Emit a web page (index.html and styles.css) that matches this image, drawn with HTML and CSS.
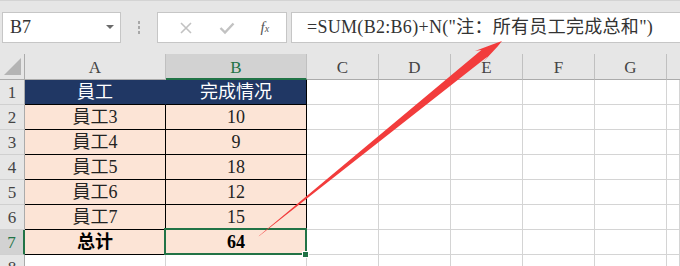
FILE: index.html
```html
<html lang="zh">
<head>
    <meta charset="UTF-8">
    <title>Sheet</title>
    <link rel="stylesheet" href="styles.css">
</head>
<body>
    <div class="app">
        <div class="toolbar">
            <div class="namebox">
                <span>B7</span>
                <svg class="caret" width="8" height="5" viewBox="0 0 8 5"><path d="M0 0H8L4 4Z" fill="#6a6a6a"/></svg>
            </div>
            <div class="dots"><i></i><i></i><i></i></div>
            <div class="fxbox">
                <svg width="14" height="14" viewBox="0 0 14 14"><path d="M2 2L12 12M12 2L2 12" stroke="#c2c2c2" stroke-width="1.6"/></svg>
                <svg width="16" height="14" viewBox="0 0 16 14"><path d="M1.5 7L6 11.5L14.5 2.5" stroke="#c2c2c2" stroke-width="2.4" fill="none"/></svg>
                <span class="fx">f<sub>x</sub></span>
            </div>
            <div class="formula">=SUM(B2:B6)+N("注：所有员工完成总和")</div>
        </div>

        <div class="sheet">
            <div class="corner"><span></span></div>
            <div class="colhead">A</div>
            <div class="colhead sel">B</div>
            <div class="colhead">C</div>
            <div class="colhead">D</div>
            <div class="colhead">E</div>
            <div class="colhead">F</div>
            <div class="colhead">G</div>
            <div class="colhead last"></div>

            <div class="rowhead">1</div>
            <div class="cell title">員工</div>
            <div class="cell title">完成情况</div>
            <div class="cell"></div><div class="cell"></div><div class="cell"></div><div class="cell"></div><div class="cell"></div><div class="cell"></div>

            <div class="rowhead">2</div>
            <div class="cell data">員工3</div>
            <div class="cell data">10</div>
            <div class="cell"></div><div class="cell"></div><div class="cell"></div><div class="cell"></div><div class="cell"></div><div class="cell"></div>

            <div class="rowhead">3</div>
            <div class="cell data">員工4</div>
            <div class="cell data">9</div>
            <div class="cell"></div><div class="cell"></div><div class="cell"></div><div class="cell"></div><div class="cell"></div><div class="cell"></div>

            <div class="rowhead">4</div>
            <div class="cell data">員工5</div>
            <div class="cell data">18</div>
            <div class="cell"></div><div class="cell"></div><div class="cell"></div><div class="cell"></div><div class="cell"></div><div class="cell"></div>

            <div class="rowhead">5</div>
            <div class="cell data">員工6</div>
            <div class="cell data">12</div>
            <div class="cell"></div><div class="cell"></div><div class="cell"></div><div class="cell"></div><div class="cell"></div><div class="cell"></div>

            <div class="rowhead">6</div>
            <div class="cell data">員工7</div>
            <div class="cell data">15</div>
            <div class="cell"></div><div class="cell"></div><div class="cell"></div><div class="cell"></div><div class="cell"></div><div class="cell"></div>

            <div class="rowhead sel">7</div>
            <div class="cell data total">总计</div>
            <div class="cell data total active">64</div>
            <div class="cell"></div><div class="cell"></div><div class="cell"></div><div class="cell"></div><div class="cell"></div><div class="cell"></div>

            <div class="rowhead">8</div>
            <div class="cell"></div><div class="cell"></div><div class="cell"></div><div class="cell"></div><div class="cell"></div><div class="cell"></div><div class="cell"></div><div class="cell"></div>
        </div>

        <!-- annotation arrow drawn over the sheet -->
        <svg class="arrow" width="680" height="266" viewBox="0 0 680 266">
            <path d="M258.6 236.6 L487.6 56.4 L483.4 61.8 L497.6 46.6 L502 41 L493 44.2 L475 51 L481.4 50 L259.4 235.4 Z" fill="#f23c3c"/>
        </svg>
    </div>
</body>
</html>
```

FILE: styles.css
```css
body {
    margin: 0;
    padding: 0;
    background: #fff;
}

.app {
    position: relative;
    width: 680px;
    height: 266px;
    overflow: hidden;
    font-family: "Liberation Serif", "Noto Sans CJK SC", serif;
}

.toolbar {
    height: 54px;
    box-sizing: border-box;
    background: #e6e6e6;
    border-top: 1px solid #d4d4d4;
    padding-top: 11px;
    display: flex;
    align-items: flex-start;
}

.namebox {
    margin-left: 2px;
    width: 119px;
    height: 31px;
    box-sizing: border-box;
    background: #fff;
    border: 1px solid #c6c6c6;
    display: flex;
    align-items: center;
    justify-content: space-between;
    padding: 0 6px 0 7px;
    font-size: 18px;
    color: #333;
}

.dots {
    width: 36px;
    height: 31px;
    display: flex;
    flex-direction: column;
    align-items: center;
    justify-content: center;
    gap: 2px;
}
.dots i {
    width: 2px;
    height: 3px;
    background: #a8a8a8;
}

.fxbox {
    width: 130px;
    height: 31px;
    box-sizing: border-box;
    background: #fff;
    border: 1px solid #c6c6c6;
    display: flex;
    align-items: center;
    justify-content: space-around;
    padding: 0 4px 0 8px;
}
.fx {
    font-style: italic;
    font-size: 15px;
    color: #555;
}
.fx sub {
    font-size: 10px;
    vertical-align: 0;
}

.formula {
    margin-left: 4px;
    flex: 1;
    height: 31px;
    box-sizing: border-box;
    background: #fff;
    border: 1px solid #c6c6c6;
    border-right: none;
    padding-left: 15px;
    line-height: 29px;
    font-size: 18px;
    letter-spacing: 0.3px;
    color: #333;
    white-space: nowrap;
}

.sheet {
    display: grid;
    grid-template-columns: 25px 141px 141px 72px 72px 72px 72px 72px 1fr;
    grid-template-rows: 26px repeat(8, 25px);
    font-size: 18px;
}

.sheet > div {
    box-sizing: border-box;
    border-right: 1px solid #d4d4d4;
    border-bottom: 1px solid #d4d4d4;
    display: flex;
    align-items: center;
    justify-content: center;
    line-height: 1;
}

.sheet > .colhead {
    background: #e6e6e6;
    border-right-color: #c0c0c0;
    border-bottom-color: #ababab;
    color: #444;
    font-size: 17px;
    padding-top: 2px;
}
.sheet > .colhead.sel {
    background: #d2d2d2;
    color: #217346;
    border-bottom: 2px solid #217346;
}
.sheet > .colhead.last {
    border-right: none;
}

.sheet > .corner {
    background: #e6e6e6;
    border-right-color: #ababab;
    border-bottom-color: #ababab;
    position: relative;
}
.corner span {
    position: absolute;
    right: 3px;
    bottom: 4px;
    width: 0;
    height: 0;
    border-left: 17px solid transparent;
    border-bottom: 17px solid #b4b4b4;
}

.sheet > .rowhead {
    background: #e6e6e6;
    border-right-color: #ababab;
    border-bottom-color: #d0d0d0;
    color: #444;
    font-size: 17px;
}
.sheet > .rowhead.sel {
    background: #d2d2d2;
    color: #217346;
    border-right: 2px solid #217346;
}

.sheet > .title {
    background: #203764;
    color: #fff;
    border-right-color: #203764;
    border-bottom-color: #000;
}
.sheet > .title + .title {
    border-right-color: #000;
}

.sheet > .data {
    background: #fce4d6;
    color: #222;
    border-right-color: #000;
    border-bottom-color: #000;
}
.sheet > .total {
    font-weight: bold;
    color: #000;
}

.sheet > .active {
    position: relative;
}
.active::before {
    content: "";
    position: absolute;
    left: -2px;
    top: -2px;
    right: -1px;
    bottom: -1px;
    border: 2px solid #217346;
}
.active::after {
    content: "";
    position: absolute;
    right: -3px;
    bottom: -4px;
    width: 5px;
    height: 5px;
    background: #217346;
    border: 1px solid #fff;
}

.arrow {
    position: absolute;
    left: 0;
    top: 0;
    pointer-events: none;
}
```
